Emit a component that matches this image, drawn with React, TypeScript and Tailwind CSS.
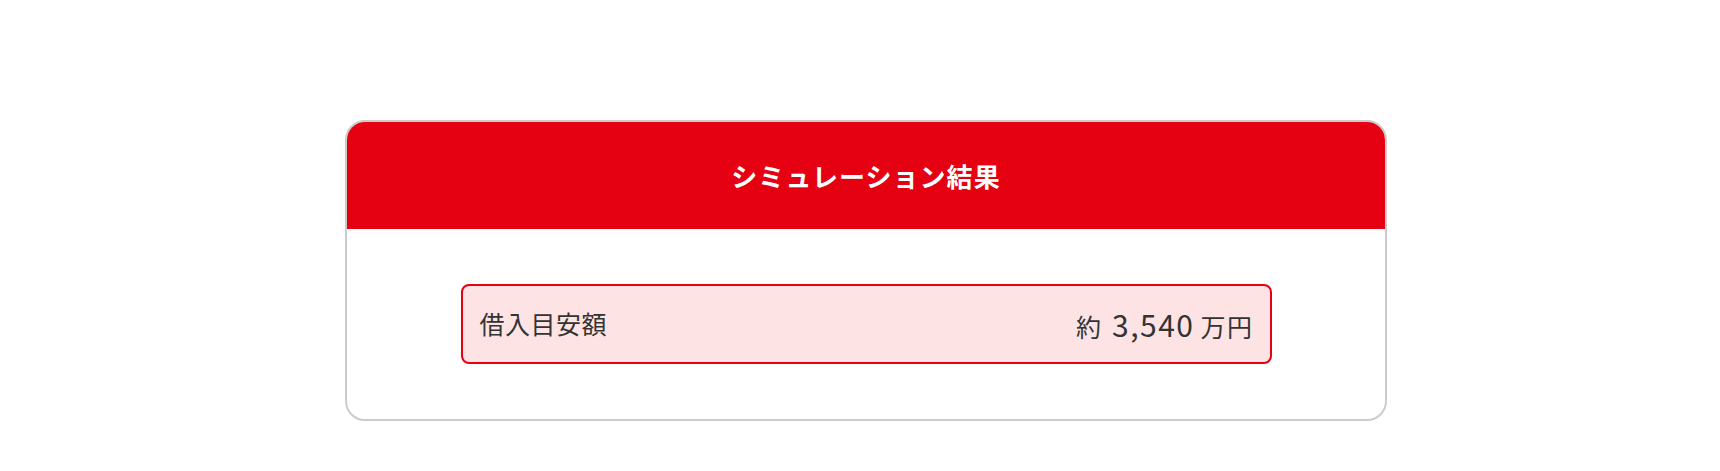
import React from "react";

export default function App() {
  return (
    <div className="w-[1720px] h-[471px] bg-white overflow-hidden" style={{ fontFamily: '"Noto Sans CJK JP", "Noto Sans", sans-serif' }}>
      <div className="ml-[345px] mt-[120px] w-[1042px] border-2 border-[#cccccc] rounded-[20px] overflow-hidden bg-white">
        <div className="h-[107px] bg-[#e50012] flex items-center justify-center">
          <h2 className="text-white text-[26px] font-bold tracking-[0.04em] leading-none">シミュレーション結果</h2>
        </div>
        <div className="pt-[55px] pb-[55px] flex justify-center">
          <div className="w-[811px] h-[80px] border-2 border-[#e60012] rounded-[8px] bg-[#fde3e4] flex items-center justify-between pl-[17px] pr-[16px] text-[#333333]">
            <span className="text-[25px] tracking-[0.02em]">借入目安額</span>
            <span className="text-[25px] flex items-baseline">
              <span>約</span>
              <span className="text-[30px] ml-[11px] tracking-[0.05em]">3,540</span>
              <span className="ml-[6px] tracking-[0.06em]">万円</span>
            </span>
          </div>
        </div>
      </div>
    </div>
  );
}
